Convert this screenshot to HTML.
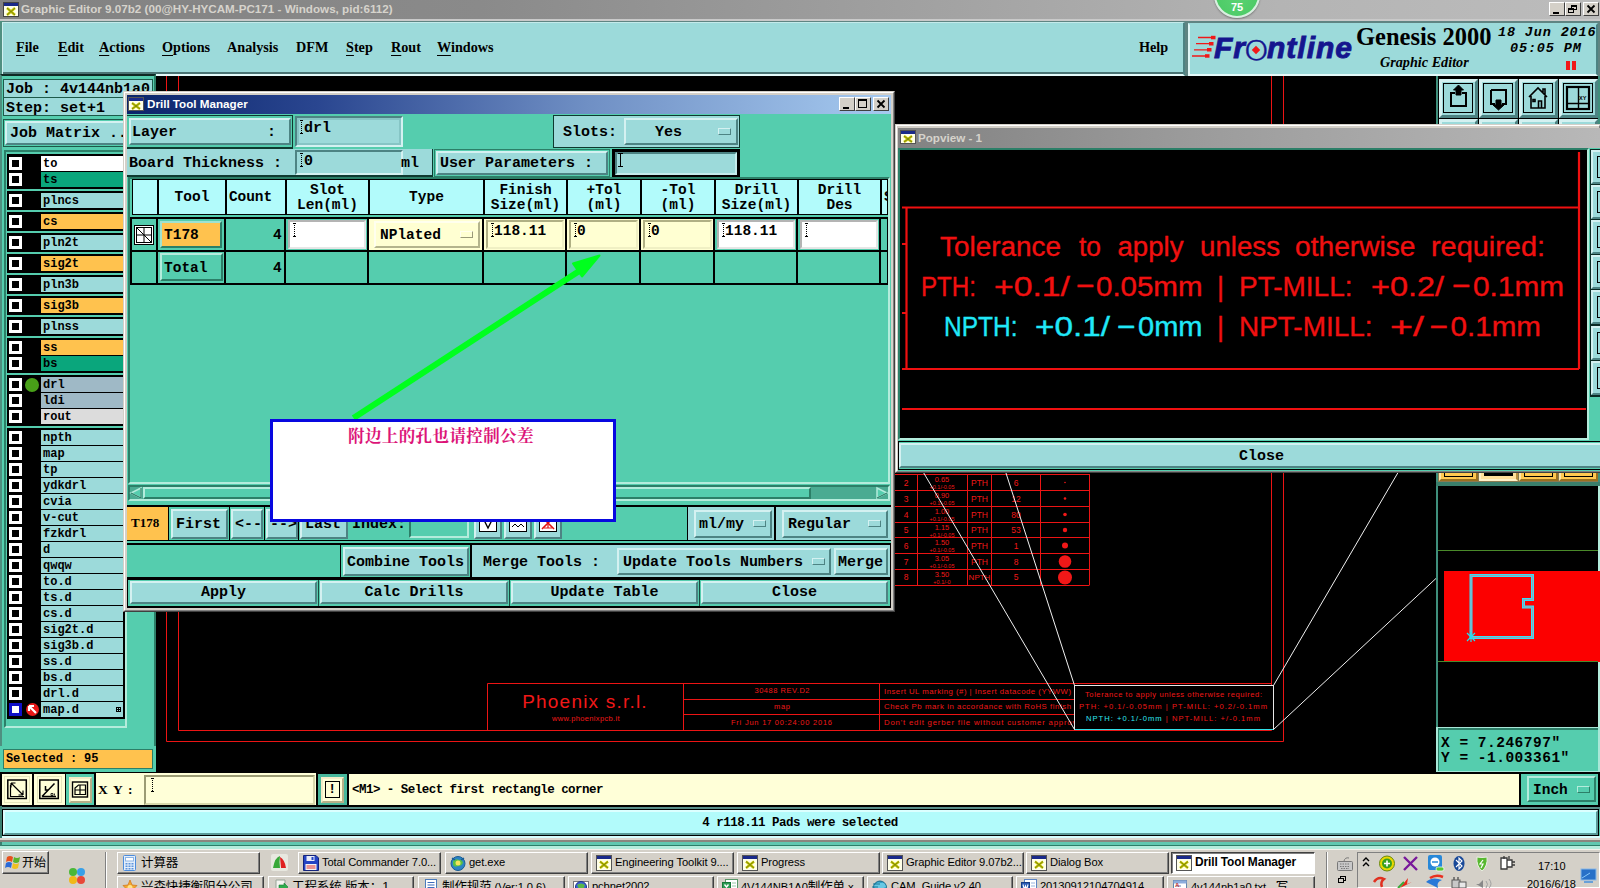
<!DOCTYPE html>
<html lang="en"><head><meta charset="utf-8"><title>Graphic Editor 9.07b2</title>
<style>
*{box-sizing:border-box;margin:0;padding:0}
html,body{width:1600px;height:888px;overflow:hidden;background:#000}
body{position:relative;font-family:"Liberation Mono","Noto Sans CJK SC",monospace;font-weight:bold;font-size:15px;color:#000;line-height:1}
.a{position:absolute;white-space:nowrap}
.teal{background:#55cdae}
.cy{background:#9cdada}
/* motif 3d: raised */
.r{border:2px solid;border-color:#d4f1f1 #4d8383 #4d8383 #d4f1f1;background:#9cdada}
.rt{border:2px solid;border-color:#b4ecdc #2c7f68 #2c7f68 #b4ecdc;background:#55cdae}
/* sunken */
.s{border:2px solid;border-color:#4d8383 #d4f1f1 #d4f1f1 #4d8383;background:#9cdada}
.st{border:2px solid;border-color:#2c7f68 #b4ecdc #b4ecdc #2c7f68;background:#55cdae}
.m{font-family:"Liberation Mono","Noto Sans CJK SC",monospace;font-weight:bold}
.c{text-align:center}
.tah{font-family:"Liberation Sans","Noto Sans CJK SC",sans-serif}
.ser{font-family:"Liberation Serif","Noto Serif CJK SC",serif}
svg{position:absolute;overflow:visible}
</style></head><body>
<!-- main app title bar -->
<div class="a" style="left:0;top:0;width:1600px;height:20px;background:linear-gradient(90deg,#828282 0%,#8a8a8a 30%,#b4b4b4 80%,#bcbcbc 100%)"></div>
<div class="a" style="left:0;top:19px;width:1600px;height:2px;background:#c9c9c9"></div>
<div class="a" style="left:0;top:21px;width:1600px;height:55px;background:#5f8482"></div>
<div class="a" style="left:0;top:21px;width:4px;height:830px;background:#4f8f80"></div>
<svg style="left:3px;top:2px" width="16" height="15" viewBox="0 0 16 15"><rect x="0" y="0" width="16" height="15" fill="#fff"/><rect x="0.5" y="0.5" width="15" height="14" fill="#ffffe8" stroke="#444"/><rect x="1" y="1" width="14" height="3" fill="#1a2a8a"/><path d="M4 6 L12 13 M12 6 L4 13" stroke="#c8c400" stroke-width="2.4"/><path d="M4 6 L12 13 M12 6 L4 13" stroke="#6a7a10" stroke-width="0.8"/></svg>
<div class="a tah" style="left:21px;top:3px;font-size:11.65px;font-weight:bold;color:#d6d3cc;letter-spacing:0px">Graphic Editor 9.07b2 (00@HY-HYCAM-PC171 - Windows, pid:6112)</div>
<!-- window controls -->
<div class="a" style="left:1549px;top:2px;width:16px;height:14px;background:#d4d0c8;border:1px solid;border-color:#fff #404040 #404040 #fff"><div class="a" style="left:3px;top:9px;width:6px;height:2px;background:#000"></div></div>
<div class="a" style="left:1565px;top:2px;width:16px;height:14px;background:#d4d0c8;border:1px solid;border-color:#fff #404040 #404040 #fff"><div class="a" style="left:5px;top:2px;width:6px;height:5px;border:1px solid #000;border-top-width:2px"></div><div class="a" style="left:2px;top:5px;width:6px;height:5px;border:1px solid #000;border-top-width:2px;background:#d4d0c8"></div></div>
<div class="a" style="left:1583px;top:2px;width:16px;height:14px;background:#d4d0c8;border:1px solid;border-color:#fff #404040 #404040 #fff"><svg style="left:3px;top:2px" width="8" height="8"><path d="M0.5 0.5 L7.5 7.5 M7.5 0.5 L0.5 7.5" stroke="#000" stroke-width="1.8"/></svg></div>
<!-- green 75 bubble -->
<div class="a" style="left:1214px;top:-28px;width:46px;height:46px;border-radius:50%;background:radial-gradient(circle at 50% 60%,#5ad272 0%,#4ccb66 65%,#38b050 100%);border:2px solid #d8efe0;box-shadow:0 1px 2px rgba(0,0,0,.35)"></div>
<div class="a tah c" style="left:1214px;top:2px;width:46px;font-size:11px;font-weight:bold;color:#fff">75</div>
<!-- menu bar -->
<div class="a" style="left:2px;top:21.5px;width:1183px;height:54.5px;background:#9cdada;border-top:1.5px solid #c4eaea;border-bottom:2px solid #e4fafa;border-right:2px solid #4d8383;border-left:1.5px solid #d0f0f0;box-shadow:inset 0 -2px 0 #4a7474"></div>
<div class="a ser" style="left:0;top:40px;font-size:14.2px;font-weight:bold;word-spacing:0;text-underline-offset:3px">
<span class="a" style="left:16px"><u>F</u>ile</span>
<span class="a" style="left:58px"><u>E</u>dit</span>
<span class="a" style="left:99px"><u>A</u>ctions</span>
<span class="a" style="left:162px"><u>O</u>ptions</span>
<span class="a" style="left:227px">Analysis</span>
<span class="a" style="left:296px">DFM</span>
<span class="a" style="left:346px"><u>S</u>tep</span>
<span class="a" style="left:391px"><u>R</u>out</span>
<span class="a" style="left:437px"><u>W</u>indows</span>
<span class="a" style="left:1139px">Help</span>
</div>
<!-- logo panel -->
<div class="a" style="left:1188px;top:23px;width:410px;height:53px;background:#9cdada;border:2px solid;border-color:#9cdada #4d8383 #e4fafa #dff6f6"></div>
<svg style="left:1190px;top:34px" width="28" height="26" viewBox="0 0 28 26"><g stroke="#f01818" stroke-width="1.3"><path d="M8 3.500H24M6 9.700H22M4 15.800H20M2 22H18"/></g><g fill="#f01818"><rect x="21" y="1.800" width="4.500" height="3.500"/><rect x="19" y="8" width="4.500" height="3.500"/><rect x="17" y="14" width="4.500" height="3.500"/><rect x="15" y="20.200" width="4.500" height="3.500"/></g></svg>
<div class="a tah" id="fl" style="left:1214px;top:32.5px;font-size:30px;font-weight:bold;font-style:italic;color:#15158e;letter-spacing:1px;-webkit-text-stroke:0.9px #15158e">Fr<span id="flo" style="display:inline-block;width:21px;height:20px;position:relative;vertical-align:baseline"><span style="position:absolute;left:-1px;top:-9px;font-family:'DejaVu Sans','Liberation Sans',sans-serif;font-weight:200;font-style:normal;font-size:37px;letter-spacing:0;-webkit-text-stroke:0.3px #15158e;transform:scale(1.2,0.95);transform-origin:50% 70%">o</span></span>ntline</div>
<div class="a" id="fld" style="left:1252.5px;top:46.5px;width:6px;height:6px;background:#f01818;transform:rotate(45deg)"></div>
<div class="a ser" style="left:1356px;top:25px;font-size:24.5px;font-weight:bold">Genesis 2000</div>
<div class="a ser" style="left:1380px;top:55px;font-size:14.2px;font-weight:bold;font-style:italic">Graphic Editor</div>
<div class="a m" style="left:1498px;top:26px;font-size:13.5px;font-style:italic;letter-spacing:0.85px">18 Jun 2016</div>
<div class="a m" style="left:1510px;top:41.500px;font-size:13.5px;font-style:italic;letter-spacing:0.85px">05:05 PM</div>
<div class="a" style="left:1566px;top:61px;width:4px;height:9px;background:#f01818"></div><div class="a" style="left:1572px;top:61px;width:4px;height:9px;background:#f01818"></div>
<!-- main canvas drawing (behind windows) -->
<svg style="left:0;top:0;z-index:0" width="1600" height="888" font-family="Liberation Sans, sans-serif" font-weight="normal">
<g stroke="#ec1414" stroke-width="1" fill="none">
<path d="M166.5 76V741.5H1283.5V76"/>
<path d="M178.5 76V730.5H1271.5V76"/>
<path d="M487.5 683.5H1271.5M487.5 683.5V730M683.5 683.5V730M879.5 683.5V730M683.5 699.5H1075M683.5 714.5H1075"/>
<!-- small drill table -->
<path d="M895 474.5H1089.5M895 490.5H1089.5M895 506.5H1089.5M895 522.5H1089.5M895 537.5H1089.5M895 553.5H1089.5M895 569.5H1089.5M895 585.5H1089.5M917.5 474V585M967.5 474V585M991.5 474V585M1040.500 474V585M1089.5 474V585"/>
</g>
<g fill="#f01818">
<circle cx="1065" cy="482.5" r="0.8"/><circle cx="1065" cy="498.500" r="1.3"/><circle cx="1065" cy="514.500" r="1.800"/><circle cx="1065" cy="530" r="2.200"/><circle cx="1065" cy="545.500" r="3"/><circle cx="1065" cy="561.5" r="6.3"/><circle cx="1065" cy="577.5" r="7"/>
</g>
<g fill="#f01818" font-size="8.5" text-anchor="middle">
<text x="906" y="485.500">2</text><text x="906" y="501.500">3</text><text x="906" y="517.500">4</text><text x="906" y="533">5</text><text x="906" y="548.500">6</text><text x="906" y="564.5">7</text><text x="906" y="580">8</text>
<text x="942" y="482" font-size="7.500">0.65</text><text x="942" y="498" font-size="7.500">0.90</text><text x="942" y="514" font-size="7.500">1.00</text><text x="942" y="529.5" font-size="7.500">1.15</text><text x="942" y="545" font-size="7.500">1.50</text><text x="942" y="561" font-size="7.500">3.05</text><text x="942" y="576.5" font-size="7.500">3.50</text>
<g font-size="5.5"><text x="942" y="489">+0.1/-0.05</text><text x="942" y="505">+0.1/-0.05</text><text x="942" y="521">+0.1/-0.05</text><text x="942" y="536.5">+0.1/-0.05</text><text x="942" y="552">+0.1/-0.05</text><text x="942" y="568">+0.1/-0.05</text><text x="942" y="583.5">+0.1/-0</text></g>
<text x="979.5" y="485.500">PTH</text><text x="979.5" y="501.500">PTH</text><text x="979.5" y="517.500">PTH</text><text x="979.5" y="533">PTH</text><text x="979.5" y="548.500">PTH</text><text x="979.5" y="564.5">PTH</text><text x="979.5" y="580" font-size="8">NPTH</text>
<text x="1016" y="485.500">6</text><text x="1016" y="501.500">12</text><text x="1016" y="517.500">80</text><text x="1016" y="533">53</text><text x="1016" y="548.500">1</text><text x="1016" y="564.5">8</text><text x="1016" y="580">5</text>
</g>
<!-- title block texts -->
<g fill="#f01818">
<text x="585" y="707.5" font-size="19" text-anchor="middle" letter-spacing="1.2">Phoenix s.r.l.</text>
<text x="552" y="721" font-size="7.500" textLength="67.5" lengthAdjust="spacing">www.phoenixpcb.it</text>
<text x="754.5" y="692.500" font-size="7.500" textLength="55" lengthAdjust="spacing">30488 REV.D2</text>
<text x="774" y="708.500" font-size="7.500" textLength="16" lengthAdjust="spacing">map</text>
<text x="731" y="724.500" font-size="7.500" textLength="101" lengthAdjust="spacing">Fri Jun 17 00:24:00 2016</text>
<text x="884" y="693.500" font-size="7.800" textLength="187" lengthAdjust="spacing">Insert UL marking (#) | Insert datacode (YYWW)</text>
<text x="884" y="709" font-size="7.800" textLength="187" lengthAdjust="spacing">Check Pb mark in accordance with RoHS finish</text>
<text x="884" y="724.500" font-size="7.800" textLength="200" lengthAdjust="spacing">Don't edit gerber file without customer approval</text>
</g>
<rect x="1074.500" y="685.5" width="199" height="44" fill="#000" stroke="#e8e8e8" stroke-width="1"/>
<path d="M1074.500 729.5H1273.5" stroke="#30e0e8" stroke-width="1.2"/>
<g font-size="7.6" fill="#f01818">
<text x="1085" y="697" textLength="177" lengthAdjust="spacing">Tolerance to apply unless otherwise required:</text>
<text x="1079" y="708.500" textLength="188" lengthAdjust="spacing">PTH: +0.1/-0.05mm | PT-MILL: +0.2/-0.1mm</text>
<text x="1086" y="720.5" textLength="174" lengthAdjust="spacing"><tspan fill="#30e8f0">NPTH: +0.1/-0mm</tspan> | NPT-MILL: +/-0.1mm</text>
</g>
<g stroke="#f0f0f0" stroke-width="1" fill="none">
<path d="M922 470L1074.500 729.500M1005 470L1074.500 685.500M1399.500 470L1273.500 685.500M1437 577.500L1273.500 729.500"/>
</g>
</svg>
<!-- left panel -->
<div class="a" style="left:0;top:74px;width:156px;height:698px;background:#55cdae;border:2px solid;border-color:#0e2a24 #2c7f68 #2c7f68 #4f8f80"></div>
<div class="a" style="left:3px;top:79px;width:150px;height:19px;border:1px solid #1d5a4a;background:#9cdada"></div>
<div class="a" style="left:3px;top:97px;width:150px;height:19px;border:1px solid #1d5a4a;background:#9cdada"></div>
<div class="a m" style="left:6px;top:82px;font-size:15px">Job : 4v144nb1a0</div>
<div class="a m" style="left:6px;top:101px;font-size:15px">Step: set+1</div>
<div class="a" style="left:3px;top:119px;width:150px;height:28px;border:1px solid #1d5a4a;background:#55cdae"></div>
<div class="a r" style="left:5px;top:121px;width:146px;height:24px"></div>
<div class="a m" style="left:10px;top:126px;font-size:15px">Job Matrix ...</div>
<div class="a" style="left:4px;top:150px;width:123px;height:578px;background:#55cdae;border:2px solid;border-color:#2c7f68 #b4ecdc #b4ecdc #2c7f68"></div>
<div class="a" style="left:7px;top:154px;width:118px;height:35px;background:#000"></div>
<div class="a" style="left:9px;top:157px;width:13px;height:13px;border:3px solid #fff;background:#000"></div>
<div class="a m" style="left:41px;top:156px;width:82px;height:15px;background:#fff;font-size:12px;line-height:16px;padding-left:2px">to</div>
<div class="a" style="left:9px;top:173px;width:13px;height:13px;border:3px solid #fff;background:#000"></div>
<div class="a m" style="left:41px;top:172px;width:82px;height:15px;background:#0aa67c;font-size:12px;line-height:16px;padding-left:2px">ts</div>
<div class="a" style="left:7px;top:191px;width:118px;height:19px;background:#000"></div>
<div class="a" style="left:9px;top:194px;width:13px;height:13px;border:3px solid #fff;background:#000"></div>
<div class="a m" style="left:41px;top:193px;width:82px;height:15px;background:#9cdada;font-size:12px;line-height:16px;padding-left:2px">plncs</div>
<div class="a" style="left:7px;top:212px;width:118px;height:19px;background:#000"></div>
<div class="a" style="left:9px;top:215px;width:13px;height:13px;border:3px solid #fff;background:#000"></div>
<div class="a m" style="left:41px;top:214px;width:82px;height:15px;background:#ffc24e;font-size:12px;line-height:16px;padding-left:2px">cs</div>
<div class="a" style="left:7px;top:233px;width:118px;height:19px;background:#000"></div>
<div class="a" style="left:9px;top:236px;width:13px;height:13px;border:3px solid #fff;background:#000"></div>
<div class="a m" style="left:41px;top:235px;width:82px;height:15px;background:#9cdada;font-size:12px;line-height:16px;padding-left:2px">pln2t</div>
<div class="a" style="left:7px;top:254px;width:118px;height:19px;background:#000"></div>
<div class="a" style="left:9px;top:257px;width:13px;height:13px;border:3px solid #fff;background:#000"></div>
<div class="a m" style="left:41px;top:256px;width:82px;height:15px;background:#ffc24e;font-size:12px;line-height:16px;padding-left:2px">sig2t</div>
<div class="a" style="left:7px;top:275px;width:118px;height:19px;background:#000"></div>
<div class="a" style="left:9px;top:278px;width:13px;height:13px;border:3px solid #fff;background:#000"></div>
<div class="a m" style="left:41px;top:277px;width:82px;height:15px;background:#9cdada;font-size:12px;line-height:16px;padding-left:2px">pln3b</div>
<div class="a" style="left:7px;top:296px;width:118px;height:19px;background:#000"></div>
<div class="a" style="left:9px;top:299px;width:13px;height:13px;border:3px solid #fff;background:#000"></div>
<div class="a m" style="left:41px;top:298px;width:82px;height:15px;background:#ffc24e;font-size:12px;line-height:16px;padding-left:2px">sig3b</div>
<div class="a" style="left:7px;top:317px;width:118px;height:19px;background:#000"></div>
<div class="a" style="left:9px;top:320px;width:13px;height:13px;border:3px solid #fff;background:#000"></div>
<div class="a m" style="left:41px;top:319px;width:82px;height:15px;background:#9cdada;font-size:12px;line-height:16px;padding-left:2px">plnss</div>
<div class="a" style="left:7px;top:338px;width:118px;height:35px;background:#000"></div>
<div class="a" style="left:9px;top:341px;width:13px;height:13px;border:3px solid #fff;background:#000"></div>
<div class="a m" style="left:41px;top:340px;width:82px;height:15px;background:#ffc24e;font-size:12px;line-height:16px;padding-left:2px">ss</div>
<div class="a" style="left:9px;top:357px;width:13px;height:13px;border:3px solid #fff;background:#000"></div>
<div class="a m" style="left:41px;top:356px;width:82px;height:15px;background:#0aa67c;font-size:12px;line-height:16px;padding-left:2px">bs</div>
<div class="a" style="left:7px;top:375px;width:118px;height:51px;background:#000"></div>
<div class="a" style="left:9px;top:378px;width:13px;height:13px;border:3px solid #fff;background:#000"></div>
<div class="a" style="left:25px;top:378px;width:14px;height:14px;border-radius:50%;background:#48a018"></div>
<div class="a m" style="left:41px;top:377px;width:82px;height:15px;background:#9fb9c6;font-size:12px;line-height:16px;padding-left:2px">drl</div>
<div class="a" style="left:9px;top:394px;width:13px;height:13px;border:3px solid #fff;background:#000"></div>
<div class="a m" style="left:41px;top:393px;width:82px;height:15px;background:#9fb9c6;font-size:12px;line-height:16px;padding-left:2px">ldi</div>
<div class="a" style="left:9px;top:410px;width:13px;height:13px;border:3px solid #fff;background:#000"></div>
<div class="a m" style="left:41px;top:409px;width:82px;height:15px;background:#dcdcdc;font-size:12px;line-height:16px;padding-left:2px">rout</div>
<div class="a" style="left:7px;top:428px;width:118px;height:291px;background:#000"></div>
<div class="a" style="left:9px;top:431px;width:13px;height:13px;border:3px solid #fff;background:#000"></div>
<div class="a m" style="left:41px;top:430px;width:82px;height:15px;background:#9cdada;font-size:12px;line-height:16px;padding-left:2px">npth</div>
<div class="a" style="left:9px;top:447px;width:13px;height:13px;border:3px solid #fff;background:#000"></div>
<div class="a m" style="left:41px;top:446px;width:82px;height:15px;background:#9cdada;font-size:12px;line-height:16px;padding-left:2px">map</div>
<div class="a" style="left:9px;top:463px;width:13px;height:13px;border:3px solid #fff;background:#000"></div>
<div class="a m" style="left:41px;top:462px;width:82px;height:15px;background:#9cdada;font-size:12px;line-height:16px;padding-left:2px">tp</div>
<div class="a" style="left:9px;top:479px;width:13px;height:13px;border:3px solid #fff;background:#000"></div>
<div class="a m" style="left:41px;top:478px;width:82px;height:15px;background:#9cdada;font-size:12px;line-height:16px;padding-left:2px">ydkdrl</div>
<div class="a" style="left:9px;top:495px;width:13px;height:13px;border:3px solid #fff;background:#000"></div>
<div class="a m" style="left:41px;top:494px;width:82px;height:15px;background:#9cdada;font-size:12px;line-height:16px;padding-left:2px">cvia</div>
<div class="a" style="left:9px;top:511px;width:13px;height:13px;border:3px solid #fff;background:#000"></div>
<div class="a m" style="left:41px;top:510px;width:82px;height:15px;background:#9cdada;font-size:12px;line-height:16px;padding-left:2px">v-cut</div>
<div class="a" style="left:9px;top:527px;width:13px;height:13px;border:3px solid #fff;background:#000"></div>
<div class="a m" style="left:41px;top:526px;width:82px;height:15px;background:#9cdada;font-size:12px;line-height:16px;padding-left:2px">fzkdrl</div>
<div class="a" style="left:9px;top:543px;width:13px;height:13px;border:3px solid #fff;background:#000"></div>
<div class="a m" style="left:41px;top:542px;width:82px;height:15px;background:#9cdada;font-size:12px;line-height:16px;padding-left:2px">d</div>
<div class="a" style="left:9px;top:559px;width:13px;height:13px;border:3px solid #fff;background:#000"></div>
<div class="a m" style="left:41px;top:558px;width:82px;height:15px;background:#9cdada;font-size:12px;line-height:16px;padding-left:2px">qwqw</div>
<div class="a" style="left:9px;top:575px;width:13px;height:13px;border:3px solid #fff;background:#000"></div>
<div class="a m" style="left:41px;top:574px;width:82px;height:15px;background:#9cdada;font-size:12px;line-height:16px;padding-left:2px">to.d</div>
<div class="a" style="left:9px;top:591px;width:13px;height:13px;border:3px solid #fff;background:#000"></div>
<div class="a m" style="left:41px;top:590px;width:82px;height:15px;background:#9cdada;font-size:12px;line-height:16px;padding-left:2px">ts.d</div>
<div class="a" style="left:9px;top:607px;width:13px;height:13px;border:3px solid #fff;background:#000"></div>
<div class="a m" style="left:41px;top:606px;width:82px;height:15px;background:#9cdada;font-size:12px;line-height:16px;padding-left:2px">cs.d</div>
<div class="a" style="left:9px;top:623px;width:13px;height:13px;border:3px solid #fff;background:#000"></div>
<div class="a m" style="left:41px;top:622px;width:82px;height:15px;background:#9cdada;font-size:12px;line-height:16px;padding-left:2px">sig2t.d</div>
<div class="a" style="left:9px;top:639px;width:13px;height:13px;border:3px solid #fff;background:#000"></div>
<div class="a m" style="left:41px;top:638px;width:82px;height:15px;background:#9cdada;font-size:12px;line-height:16px;padding-left:2px">sig3b.d</div>
<div class="a" style="left:9px;top:655px;width:13px;height:13px;border:3px solid #fff;background:#000"></div>
<div class="a m" style="left:41px;top:654px;width:82px;height:15px;background:#9cdada;font-size:12px;line-height:16px;padding-left:2px">ss.d</div>
<div class="a" style="left:9px;top:671px;width:13px;height:13px;border:3px solid #fff;background:#000"></div>
<div class="a m" style="left:41px;top:670px;width:82px;height:15px;background:#9cdada;font-size:12px;line-height:16px;padding-left:2px">bs.d</div>
<div class="a" style="left:9px;top:687px;width:13px;height:13px;border:3px solid #fff;background:#000"></div>
<div class="a m" style="left:41px;top:686px;width:82px;height:15px;background:#9cdada;font-size:12px;line-height:16px;padding-left:2px">drl.d</div>
<div class="a" style="left:9px;top:703px;width:13px;height:13px;border:3px solid #1010c8;background:#fff"></div>
<div class="a" style="left:26px;top:703px;width:13px;height:13px;border-radius:50%;background:#e81818"></div>
<svg style="left:26px;top:703px" width="13" height="13"><path d="M3 3H8M3 3V8M3.500 3.500L10 10" stroke="#fff" stroke-width="2.200" fill="none"/></svg>
<div class="a m" style="left:41px;top:702px;width:82px;height:15px;background:#9cdada;font-size:12px;line-height:16px;padding-left:2px">map.d</div>
<div class="a" style="left:116px;top:707px;width:5px;height:5px;border:1px solid #000"></div><div class="a" style="left:118px;top:707px;width:1px;height:5px;background:#000"></div><div class="a" style="left:116px;top:709px;width:5px;height:1px;background:#000"></div>
<!-- right toolbar -->
<div class="a" style="left:1436px;top:76px;width:164px;height:696px;background:#3f8f7c"></div>
<div class="a" style="left:1438px;top:76px;width:160px;height:410px;background:#000"></div>
<div class="a r" style="left:1439px;top:79px;width:39px;height:39px;border-width:3px"></div>
<div class="a r" style="left:1479px;top:79px;width:39px;height:39px;border-width:3px"></div>
<div class="a r" style="left:1519px;top:79px;width:39px;height:39px;border-width:3px"></div>
<div class="a r" style="left:1559px;top:79px;width:39px;height:39px;border-width:3px"></div>
<div class="a r" style="left:1439px;top:119px;width:39px;height:39px;border-width:3px"></div>
<div class="a r" style="left:1479px;top:119px;width:39px;height:39px;border-width:3px"></div>
<div class="a r" style="left:1519px;top:119px;width:39px;height:39px;border-width:3px"></div>
<div class="a r" style="left:1559px;top:119px;width:39px;height:39px;border-width:3px"></div>
<svg style="left:1439px;top:79px" width="160" height="40" viewBox="0 0 160 40" fill="none" stroke="#000">
<g stroke-width="1"><rect x="4.500" y="4.500" width="29" height="29"/><rect x="44.500" y="4.500" width="29" height="29"/><rect x="84.500" y="4.500" width="29" height="29"/><rect x="124.500" y="4.500" width="29" height="29"/></g>
<path d="M16 14H12V27H27V14H23" stroke-width="2"/><path d="M19.500 6L14.500 11H17V16H22V11H24.500Z" fill="#000" stroke-width="1"/>
<path d="M52 11H67V25H63M56 25H52V11" stroke-width="2"/><path d="M57 21H62V26H65L59.500 31L54 26H57Z" fill="#000" stroke-width="1"/>
<path d="M90 18L99 9L108 18M92 17V29H106V17M99.500 29V22H102.500V29M94 20.500H96V22.500H94Z M104 14V10H106V16" stroke-width="1.6"/>
<rect x="128" y="8" width="22" height="22" stroke-width="2.200"/><path d="M139.500 8V30M128 24.500H150" stroke-width="1.4"/>
</svg>
<div class="a tah" style="left:1579px;top:96px;font-size:5.5px;font-weight:bold">XY</div>
<!-- orange row -->
<div class="a" style="left:1438px;top:470px;width:160px;height:14px;background:#8a7a50"></div>
<div class="a" style="left:1439px;top:462px;width:39px;height:19px;background:#ffc850;border:2px solid;border-color:#ffe6a8 #9a7020 #9a7020 #ffe6a8"></div>
<div class="a" style="left:1479px;top:462px;width:39px;height:19px;background:#ffe09a;border:2px solid;border-color:#fff0c8 #b89040 #fff0c8 #fff0c8"></div>
<div class="a" style="left:1519px;top:462px;width:39px;height:19px;background:#ffc850;border:2px solid;border-color:#ffe6a8 #9a7020 #9a7020 #ffe6a8"></div>
<div class="a" style="left:1559px;top:462px;width:39px;height:19px;background:#ffc850;border:2px solid;border-color:#ffe6a8 #9a7020 #9a7020 #ffe6a8"></div>
<div class="a" style="left:1444px;top:470px;width:29px;height:7px;border:1px solid #000;border-top:0"></div>
<div class="a" style="left:1484px;top:470px;width:29px;height:6px;background:#000"></div>
<div class="a" style="left:1524px;top:470px;width:29px;height:7px;border:1px solid #000;border-top:0"></div>
<div class="a" style="left:1564px;top:470px;width:29px;height:7px;border:1px solid #000;border-top:0"></div>
<div class="a" style="left:1436px;top:482px;width:164px;height:4px;background:#3a7f6c"></div>
<!-- minimap -->
<div class="a" style="left:1438px;top:486px;width:160px;height:241px;background:#000"></div>
<div class="a" style="left:1598px;top:486px;width:2px;height:241px;background:#b4ecdc"></div>
<div class="a" style="left:1444px;top:571px;width:156px;height:91px;background:#fc0000"></div>
<div class="a" style="left:1438px;top:550px;width:160px;height:1px;background:#4a8a2a"></div>
<div class="a" style="left:1438px;top:661px;width:160px;height:1px;background:#4a8a2a"></div>
<svg style="left:1438px;top:486px" width="160" height="241"><path d="M33 151.500V89.500H94.500V113.500H85.500V121H94.500V151.500Z" fill="none" stroke="#38e0f8" stroke-width="3"/><path d="M33 151.500V89.500H94.500V113.500H85.500V121H94.500V151.500Z" fill="none" stroke="#c08898" stroke-width="0.7"/><path d="M29 147L37 155M37 147L29 155M33 146V156" stroke="#20e0f0" stroke-width="1.200"/></svg>
<!-- coords -->
<div class="a" style="left:1436px;top:726.5px;width:164px;height:46px;background:#a8e8d8"></div><div class="a" style="left:1438px;top:728px;width:160px;height:43px;background:#55cdae;border-top:2px solid #2c7f68;border-left:1px solid #2c7f68"></div>
<div class="a" style="left:1441px;top:736px;font-size:14.5px;letter-spacing:0.5px">X = 7.246797"</div>
<div class="a" style="left:1441px;top:751px;font-size:14.5px;letter-spacing:0.5px">Y = -1.003361"</div>
<!-- Drill Tool Manager window -->
<div class="a" style="left:123px;top:91px;width:772px;height:521px;background:#d4d0c8;border:1px solid;border-color:#d4d0c8 #404040 #404040 #d4d0c8"></div>
<div class="a" style="left:124px;top:92px;width:770px;height:519px;border:1px solid;border-color:#fff #808080 #808080 #fff"></div>
<div class="a" style="left:127px;top:95px;width:764px;height:19px;background:linear-gradient(90deg,#0a246a 0%,#2a4690 25%,#6f8fc4 60%,#a6caf0 100%)"></div>
<svg style="left:128px;top:97px" width="16" height="14" viewBox="0 0 16 14"><rect x="0.5" y="0.5" width="15" height="13" fill="#ffffe8" stroke="#555"/><rect x="1" y="1" width="14" height="3" fill="#1a2a8a"/><path d="M4 6 L12 12 M12 6 L4 12" stroke="#c8c400" stroke-width="2.4"/><path d="M4 6 L12 12 M12 6 L4 12" stroke="#6a7a10" stroke-width="0.8"/></svg>
<div class="a tah" style="left:147px;top:98px;font-size:11.65px;font-weight:bold;color:#fff">Drill Tool Manager</div>
<div class="a" style="left:839px;top:97px;width:16px;height:14px;background:#d4d0c8;border:1px solid;border-color:#fff #404040 #404040 #fff"><div class="a" style="left:3px;top:9px;width:6px;height:2px;background:#000"></div></div>
<div class="a" style="left:855px;top:97px;width:16px;height:14px;background:#d4d0c8;border:1px solid;border-color:#fff #404040 #404040 #fff"><div class="a" style="left:2px;top:1px;width:9px;height:9px;border:1px solid #000;border-top-width:2px"></div></div>
<div class="a" style="left:873px;top:97px;width:16px;height:14px;background:#d4d0c8;border:1px solid;border-color:#fff #404040 #404040 #fff"><svg style="left:3px;top:2px" width="8" height="8"><path d="M0.5 0.5 L7.5 7.5 M7.5 0.5 L0.5 7.5" stroke="#000" stroke-width="1.8"/></svg></div>
<!-- client -->
<div class="a teal" style="left:127px;top:114px;width:764px;height:494px"></div>
<!-- row1 -->
<div class="a" style="left:127px;top:115px;width:166px;height:34px;background:#55cdae;border:1px solid #0e3a30;border-width:1px 1px 2px 0"></div>
<div class="a r" style="left:129px;top:118px;width:162px;height:27px"></div>
<div class="a" style="left:132px;top:125px">Layer</div><div class="a" style="left:267px;top:125px">:</div>
<div class="a s" style="left:295px;top:116px;width:108px;height:31px"></div>
<div class="a" style="left:297px;top:118px;width:104px;height:27px;border:2px solid #86c5c5"></div>
<div class="a" style="left:301px;top:120px;width:1px;height:13px;background:repeating-linear-gradient(#000 0 1px,transparent 1px 2px)"></div><div class="a" style="left:300px;top:120px;width:3px;height:1px;background:#000"></div><div class="a" style="left:300px;top:133px;width:3px;height:1px;background:#000"></div><div class="a" style="left:304px;top:121px">drl</div>
<div class="a" style="left:553px;top:115px;width:187px;height:33px;background:#9cdada;border:1px solid;border-color:#0e3a30"></div>
<div class="a" style="left:563px;top:125px">Slots:</div>
<div class="a r" style="left:624px;top:118px;width:114px;height:27px"></div>
<div class="a" style="left:655px;top:125px">Yes</div>
<div class="a r" style="left:718px;top:128px;width:13px;height:7px;border-width:1px"></div>
<!-- row2 -->
<div class="a" style="left:127px;top:149px;width:306px;height:28px;background:#9cdada;border:1px solid #0e3a30;border-width:0 1px 2px 0"></div>
<div class="a" style="left:129px;top:156px">Board Thickness :</div>
<div class="a s" style="left:295px;top:150px;width:108px;height:25px"></div>
<div class="a" style="left:301px;top:153px;width:1px;height:13px;background:repeating-linear-gradient(#000 0 1px,transparent 1px 2px)"></div><div class="a" style="left:300px;top:153px;width:3px;height:1px;background:#000"></div><div class="a" style="left:300px;top:166px;width:3px;height:1px;background:#000"></div><div class="a" style="left:304px;top:154px">0</div>
<div class="a" style="left:401px;top:156px">ml</div>
<div class="a" style="left:434px;top:149px;width:176px;height:28px;background:#55cdae;border:1px solid #2c7f68"></div>
<div class="a r" style="left:436px;top:151px;width:172px;height:24px"></div>
<div class="a" style="left:440px;top:156px">User Parameters :</div>
<div class="a" style="left:612px;top:149px;width:128px;height:29px;background:#9cdada;border:3px solid #000"></div>
<div class="a s" style="left:615px;top:152px;width:122px;height:23px;border-color:#4d8383 #c4ecec #c4ecec #4d8383"></div>
<div class="a" style="left:620px;top:153px;width:1px;height:14px;background:#000"></div><div class="a" style="left:618px;top:153px;width:5px;height:1px;background:#000"></div><div class="a" style="left:618px;top:166px;width:5px;height:1px;background:#000"></div>
<!-- table frame -->
<div class="a st" style="left:128px;top:177px;width:762px;height:307px"></div>


<div class="a" style="left:132px;top:179px;width:756px;height:36px;background:#000"></div>
<div class="a" style="left:130px;top:217px;width:758px;height:68px;background:#000"></div>
<div class="a c" style="left:133px;top:180px;width:24px;height:34px;background:#b2fbfb;font-size:14.5px;line-height:15px;padding-top:10px;overflow:hidden"></div>
<div class="a" style="left:132px;top:219px;width:24px;height:31px;background:#55cdae"></div>
<div class="a" style="left:132px;top:252px;width:24px;height:31px;background:#55cdae"></div>
<div class="a c" style="left:159px;top:180px;width:66px;height:34px;background:#b2fbfb;font-size:14.5px;line-height:15px;padding-top:10px;overflow:hidden">Tool</div>
<div class="a" style="left:158px;top:219px;width:66px;height:31px;background:#55cdae"></div>
<div class="a" style="left:158px;top:252px;width:66px;height:31px;background:#55cdae"></div>
<div class="a c" style="left:227px;top:180px;width:58px;height:34px;background:#b2fbfb;font-size:14.5px;line-height:15px;padding-top:10px;overflow:hidden;text-align:left;padding-left:2px;letter-spacing:-0.1px">Count</div>
<div class="a" style="left:226px;top:219px;width:58px;height:31px;background:#55cdae"></div>
<div class="a" style="left:226px;top:252px;width:58px;height:31px;background:#55cdae"></div>
<div class="a c" style="left:287px;top:180px;width:81px;height:34px;background:#b2fbfb;font-size:14.5px;line-height:15px;padding-top:3px;overflow:hidden">Slot<br>Len(ml)</div>
<div class="a" style="left:286px;top:219px;width:81px;height:31px;background:#55cdae"></div>
<div class="a" style="left:286px;top:252px;width:81px;height:31px;background:#55cdae"></div>
<div class="a c" style="left:370px;top:180px;width:113px;height:34px;background:#b2fbfb;font-size:14.5px;line-height:15px;padding-top:10px;overflow:hidden">Type</div>
<div class="a" style="left:369px;top:219px;width:113px;height:31px;background:#ffffd2"></div>
<div class="a" style="left:369px;top:252px;width:113px;height:31px;background:#55cdae"></div>
<div class="a c" style="left:485px;top:180px;width:81px;height:34px;background:#b2fbfb;font-size:14.5px;line-height:15px;padding-top:3px;overflow:hidden">Finish<br>Size(ml)</div>
<div class="a" style="left:484px;top:219px;width:81px;height:31px;background:#ffffd2"></div>
<div class="a" style="left:484px;top:252px;width:81px;height:31px;background:#55cdae"></div>
<div class="a c" style="left:568px;top:180px;width:72px;height:34px;background:#b2fbfb;font-size:14.5px;line-height:15px;padding-top:3px;overflow:hidden">+Tol<br>(ml)</div>
<div class="a" style="left:567px;top:219px;width:72px;height:31px;background:#ffffd2"></div>
<div class="a" style="left:567px;top:252px;width:72px;height:31px;background:#55cdae"></div>
<div class="a c" style="left:642px;top:180px;width:72px;height:34px;background:#b2fbfb;font-size:14.5px;line-height:15px;padding-top:3px;overflow:hidden">-Tol<br>(ml)</div>
<div class="a" style="left:641px;top:219px;width:72px;height:31px;background:#ffffd2"></div>
<div class="a" style="left:641px;top:252px;width:72px;height:31px;background:#55cdae"></div>
<div class="a c" style="left:716px;top:180px;width:81px;height:34px;background:#b2fbfb;font-size:14.5px;line-height:15px;padding-top:3px;overflow:hidden">Drill<br>Size(ml)</div>
<div class="a" style="left:715px;top:219px;width:81px;height:31px;background:#55cdae"></div>
<div class="a" style="left:715px;top:252px;width:81px;height:31px;background:#55cdae"></div>
<div class="a c" style="left:799px;top:180px;width:81px;height:34px;background:#b2fbfb;font-size:14.5px;line-height:15px;padding-top:3px;overflow:hidden">Drill<br>Des</div>
<div class="a" style="left:798px;top:219px;width:81px;height:31px;background:#55cdae"></div>
<div class="a" style="left:798px;top:252px;width:81px;height:31px;background:#55cdae"></div>
<div class="a c" style="left:882px;top:180px;width:5px;height:34px;background:#b2fbfb;font-size:14.5px;line-height:15px;padding-top:10px;overflow:hidden;text-align:left;padding-left:2px">S</div>
<div class="a" style="left:881px;top:219px;width:6px;height:31px;background:#55cdae"></div>
<div class="a" style="left:881px;top:252px;width:6px;height:31px;background:#55cdae"></div>
<svg style="left:134px;top:225px" width="20" height="20" viewBox="0 0 20 20"><rect x="0.5" y="0.5" width="19" height="19" fill="#fff" stroke="#000"/><rect x="2.5" y="2.5" width="15" height="15" fill="none" stroke="#000"/><path d="M10 2V18M2 10H18M3 3L17 17" stroke="#000" stroke-width="1"/></svg>
<div class="a" style="left:160px;top:221px;width:62px;height:27px;background:#ffc24e;border:2px solid;border-color:#9fe2d0 #2c7f68 #2c7f68 #9fe2d0"></div>
<div class="a" style="left:164px;top:228px;font-size:14.5px">T178</div>
<div class="a" style="left:273px;top:228px;font-size:14.5px">4</div>
<div class="a" style="left:273px;top:261px;font-size:14.5px">4</div>
<div class="a rt" style="left:160px;top:253px;width:63px;height:28px"></div>
<div class="a" style="left:164px;top:261px;font-size:14.5px">Total</div>
<div class="a" style="left:288px;top:220px;width:78px;height:29px;background:#fff;border:2px solid;border-color:#b4b4b4 #e6e6e6 #e6e6e6 #b4b4b4"></div><div class="a" style="left:294px;top:223px;width:1px;height:13px;background:repeating-linear-gradient(#000 0 1px,transparent 1px 2px)"></div><div class="a" style="left:293px;top:223px;width:3px;height:1px;background:#000"></div><div class="a" style="left:293px;top:236px;width:3px;height:1px;background:#000"></div>
<div class="a" style="left:374px;top:221px;width:106px;height:27px;background:#ffffd2;border:2px solid;border-color:#ffffee #b4b48c #b4b48c #ffffee"></div>
<div class="a" style="left:380px;top:228px;font-size:14.5px">NPlated</div>
<div class="a" style="left:460px;top:231px;width:13px;height:7px;background:#ffffd2;border:1px solid;border-color:#ffffee #9a9a78 #9a9a78 #ffffee"></div>
<div class="a" style="left:486px;top:220px;width:78px;height:29px;background:#ffffd2;border:2px solid;border-color:#b0b084 #f0f0c4 #f0f0c4 #b0b084"></div><div class="a" style="left:492px;top:223px;width:1px;height:13px;background:repeating-linear-gradient(#000 0 1px,transparent 1px 2px)"></div><div class="a" style="left:491px;top:223px;width:3px;height:1px;background:#000"></div><div class="a" style="left:491px;top:236px;width:3px;height:1px;background:#000"></div><div class="a" style="left:494px;top:224px;font-size:14.5px">118.11</div>
<div class="a" style="left:569px;top:220px;width:69px;height:29px;background:#ffffd2;border:2px solid;border-color:#b0b084 #f0f0c4 #f0f0c4 #b0b084"></div><div class="a" style="left:575px;top:223px;width:1px;height:13px;background:repeating-linear-gradient(#000 0 1px,transparent 1px 2px)"></div><div class="a" style="left:574px;top:223px;width:3px;height:1px;background:#000"></div><div class="a" style="left:574px;top:236px;width:3px;height:1px;background:#000"></div><div class="a" style="left:577px;top:224px;font-size:14.5px">0</div>
<div class="a" style="left:643px;top:220px;width:69px;height:29px;background:#ffffd2;border:2px solid;border-color:#b0b084 #f0f0c4 #f0f0c4 #b0b084"></div><div class="a" style="left:649px;top:223px;width:1px;height:13px;background:repeating-linear-gradient(#000 0 1px,transparent 1px 2px)"></div><div class="a" style="left:648px;top:223px;width:3px;height:1px;background:#000"></div><div class="a" style="left:648px;top:236px;width:3px;height:1px;background:#000"></div><div class="a" style="left:651px;top:224px;font-size:14.5px">0</div>
<div class="a" style="left:717px;top:220px;width:78px;height:29px;background:#fff;border:2px solid;border-color:#b4b4b4 #e6e6e6 #e6e6e6 #b4b4b4"></div><div class="a" style="left:723px;top:223px;width:1px;height:13px;background:repeating-linear-gradient(#000 0 1px,transparent 1px 2px)"></div><div class="a" style="left:722px;top:223px;width:3px;height:1px;background:#000"></div><div class="a" style="left:722px;top:236px;width:3px;height:1px;background:#000"></div><div class="a" style="left:725px;top:224px;font-size:14.5px">118.11</div>
<div class="a" style="left:800px;top:220px;width:78px;height:29px;background:#fff;border:2px solid;border-color:#b4b4b4 #e6e6e6 #e6e6e6 #b4b4b4"></div><div class="a" style="left:806px;top:223px;width:1px;height:13px;background:repeating-linear-gradient(#000 0 1px,transparent 1px 2px)"></div><div class="a" style="left:805px;top:223px;width:3px;height:1px;background:#000"></div><div class="a" style="left:805px;top:236px;width:3px;height:1px;background:#000"></div>
<!-- scrollbar -->
<div class="a" style="left:128px;top:485px;width:762px;height:16px;background:#4aab92;border:2px solid;border-color:#2c7f68 #b4ecdc #b4ecdc #2c7f68"></div>
<div class="a" style="left:143px;top:487px;width:668px;height:12px;background:#55cdae;border:2px solid;border-color:#b4ecdc #2c7f68 #2c7f68 #b4ecdc"></div>
<svg style="left:130px;top:487px" width="12" height="12"><path d="M11 1 L1 6 L11 11 Z" fill="#55cdae" stroke="#b4ecdc" stroke-width="1.5"/><path d="M11 1 V11 L1 6" fill="none" stroke="#2c7f68" stroke-width="1.2"/></svg>
<svg style="left:876px;top:487px" width="12" height="12"><path d="M1 1 L11 6 L1 11 Z" fill="#55cdae" stroke="#b4ecdc" stroke-width="1.5"/><path d="M1 11 L11 6" fill="none" stroke="#2c7f68" stroke-width="1.2"/></svg>
<!-- nav row -->
<div class="a" style="left:127px;top:505px;width:764px;height:36px;background:#000"></div>
<div class="a" style="left:127px;top:507px;width:41px;height:33px;background:#ffc24e"></div>
<div class="a ser" style="left:131px;top:516px;font-size:13px;font-weight:bold">T178</div>
<div class="a teal" style="left:169px;top:507px;width:305px;height:33px"></div>
<div class="a r" style="left:171px;top:509px;width:57px;height:30px"></div><div class="a" style="left:176px;top:517px">First</div>
<div class="a" style="left:229px;top:507px;width:1px;height:33px;background:#000"></div>
<div class="a r" style="left:231px;top:509px;width:32px;height:30px"></div><div class="a" style="left:235px;top:517px">&lt;--</div>
<div class="a" style="left:264px;top:507px;width:1px;height:33px;background:#000"></div>
<div class="a r" style="left:266px;top:509px;width:32px;height:30px"></div><div class="a" style="left:270px;top:517px">--&gt;</div>
<div class="a" style="left:298px;top:507px;width:1px;height:33px;background:#000"></div>
<div class="a r" style="left:300px;top:509px;width:48px;height:30px"></div><div class="a" style="left:305px;top:517px">Last</div>
<div class="a" style="left:349px;top:507px;width:124px;height:33px;background:#55cdae"></div>
<div class="a" style="left:352px;top:517px">Index:</div>
<div class="a st" style="left:409px;top:509px;width:60px;height:29px"></div>
<div class="a teal" style="left:473px;top:507px;width:214px;height:33px"></div>
<div class="a r" style="left:474px;top:509px;width:28px;height:30px"></div>
<div class="a r" style="left:504px;top:509px;width:28px;height:30px"></div>
<div class="a r" style="left:534px;top:509px;width:28px;height:30px"></div>
<svg style="left:478px;top:513px" width="80" height="22" viewBox="0 0 80 22"><g fill="#fff" stroke="#000" stroke-width="1"><rect x="1.5" y="1.5" width="17" height="17"/><rect x="31.5" y="1.5" width="17" height="17"/><rect x="61.5" y="1.5" width="17" height="17"/></g><path d="M5 5 L10 15 L15 5" fill="none" stroke="#000" stroke-width="1.4"/><path d="M34 14 l3 -3 l3 3 l3 -3 l3 3" fill="none" stroke="#000"/><path d="M64 4 L76 16 M76 4 L64 16" stroke="#e01010" stroke-width="1.6"/><path d="M70 6 v9 M66 15 h8" stroke="#e01010" stroke-width="1.2"/></svg>
<!-- units -->
<div class="a" style="left:688px;top:507px;width:86px;height:33px;background:#9cdada"></div>
<div class="a r" style="left:694px;top:510px;width:78px;height:28px"></div><div class="a" style="left:699px;top:517px">ml/my</div>
<div class="a r" style="left:753px;top:520px;width:13px;height:7px;border-width:1px"></div>
<div class="a" style="left:776px;top:507px;width:115px;height:33px;background:#9cdada"></div>
<div class="a r" style="left:782px;top:510px;width:106px;height:28px"></div><div class="a" style="left:788px;top:517px">Regular</div>
<div class="a r" style="left:868px;top:520px;width:13px;height:7px;border-width:1px"></div>
<!-- merge row -->
<div class="a" style="left:127px;top:543px;width:764px;height:36px;background:#000"></div>
<div class="a teal" style="left:127px;top:545px;width:213px;height:32px"></div>
<div class="a teal" style="left:341px;top:545px;width:129px;height:32px"></div>
<div class="a r" style="left:343px;top:547px;width:126px;height:29px"></div><div class="a" style="left:347px;top:555px">Combine Tools</div>
<div class="a cy" style="left:472px;top:545px;width:418px;height:32px"></div>
<div class="a" style="left:483px;top:555px">Merge Tools :</div>
<div class="a r" style="left:617px;top:548px;width:214px;height:27px"></div><div class="a" style="left:623px;top:555px">Update Tools Numbers</div>
<div class="a r" style="left:812px;top:558px;width:13px;height:7px;border-width:1px"></div>
<div class="a r" style="left:834px;top:548px;width:54px;height:27px"></div><div class="a" style="left:838px;top:555px">Merge</div>
<!-- apply row -->
<div class="a" style="left:127px;top:578px;width:764px;height:30px;background:#000"></div>
<div class="a" style="left:128px;top:579.5px;width:761.5px;height:26.5px;background:#55cdae"></div>
<div class="a r c" style="left:130px;top:581px;width:187px;height:23px;line-height:20px">Apply</div>
<div class="a r c" style="left:320px;top:581px;width:188px;height:23px;line-height:20px">Calc Drills</div>
<div class="a r c" style="left:511px;top:581px;width:187px;height:23px;line-height:20px">Update Table</div>
<div class="a r c" style="left:701px;top:581px;width:187px;height:23px;line-height:20px">Close</div>
<div class="a" style="left:318px;top:579.5px;width:1px;height:26.5px;background:#1a4a40"></div><div class="a" style="left:509px;top:579.5px;width:1px;height:26.5px;background:#1a4a40"></div><div class="a" style="left:699px;top:579.5px;width:1px;height:26.5px;background:#1a4a40"></div>
<!-- annotation: arrow + box -->
<svg style="left:0;top:0" width="1600" height="888"><line x1="353.500" y1="418" x2="580" y2="270.500" stroke="#00ff1e" stroke-width="6.2"/><polygon points="599.5,255.5 573,263.5 582,276.5" fill="#00ff1e" stroke="#00ff1e" stroke-width="2" stroke-linejoin="round"/></svg>
<div class="a" style="left:270px;top:419px;width:346px;height:103px;background:#fff;border:3px solid #0808e0"></div>
<div class="a" style="left:348px;top:428.5px;font-family:'Liberation Serif','Noto Serif CJK SC','Noto Sans CJK SC',serif;font-weight:700;font-size:16.5px;color:#dc1478;letter-spacing:0.4px">附边上的孔也请控制公差</div>
<!-- Popview window -->
<div class="a" style="left:895px;top:124px;width:706px;height:349px;background:#d4d0c8;border:1px solid;border-color:#d4d0c8 #404040 #404040 #d4d0c8"></div>
<div class="a" style="left:896px;top:125px;width:704px;height:347px;border:1px solid;border-color:#fff #808080 #808080 #fff"></div>
<div class="a" style="left:898px;top:128px;width:702px;height:20px;background:linear-gradient(90deg,#828282 0%,#9a9a9a 40%,#b8b8b8 100%)"></div>
<svg style="left:900px;top:130px" width="16" height="14" viewBox="0 0 16 14"><rect x="0.5" y="0.5" width="15" height="13" fill="#ffffe8" stroke="#555"/><rect x="1" y="1" width="14" height="3" fill="#1a2a8a"/><path d="M4 6 L12 12 M12 6 L4 12" stroke="#c8c400" stroke-width="2.4"/><path d="M4 6 L12 12 M12 6 L4 12" stroke="#6a7a10" stroke-width="0.8"/></svg>
<div class="a tah" style="left:918px;top:132px;font-size:11.65px;font-weight:bold;color:#d6d3cc">Popview - 1</div>
<div class="a" style="left:898px;top:148px;width:702px;height:323px;background:#55cdae"></div>
<div class="a" style="left:898px;top:148px;width:691px;height:292px;background:#000;border:2px solid;border-color:#2c7f68 #b4ecdc #b4ecdc #2c7f68"></div>
<svg style="left:0;top:0" width="1600" height="888" font-family="Liberation Sans, sans-serif" font-weight="normal">
<g stroke="#f01010" stroke-width="2.2" fill="none"><path d="M902 207.5H1579M906.500 207V369M902 369H1579M1579 152V369M902 409H1586M902 244H907M902 313H907"/></g>
<g font-size="27" stroke-width="0.35">
<text x="940" y="255.5" textLength="121" lengthAdjust="spacingAndGlyphs" fill="#f01010" stroke="#f01010">Tolerance</text>
<text x="1079" y="255.5" textLength="22" lengthAdjust="spacingAndGlyphs" fill="#f01010" stroke="#f01010">to</text>
<text x="1117.5" y="255.5" textLength="66.0" lengthAdjust="spacingAndGlyphs" fill="#f01010" stroke="#f01010">apply</text>
<text x="1200" y="255.5" textLength="80" lengthAdjust="spacingAndGlyphs" fill="#f01010" stroke="#f01010">unless</text>
<text x="1295" y="255.5" textLength="120.5" lengthAdjust="spacingAndGlyphs" fill="#f01010" stroke="#f01010">otherwise</text>
<text x="1431" y="255.5" textLength="114" lengthAdjust="spacingAndGlyphs" fill="#f01010" stroke="#f01010">required:</text>
<text x="921" y="295.5" textLength="55" lengthAdjust="spacingAndGlyphs" fill="#f01010" stroke="#f01010">PTH:</text>
<text x="1217" y="295.5" fill="#f01010" stroke="#f01010">|</text>
<text x="1239" y="295.5" textLength="113.5" lengthAdjust="spacingAndGlyphs" fill="#f01010" stroke="#f01010">PT-MILL:</text>
<text x="944" y="336" textLength="73.5" lengthAdjust="spacingAndGlyphs" fill="#20e8f8" stroke="#20e8f8">NPTH:</text>
<text x="1217" y="336" fill="#f01010" stroke="#f01010">|</text>
<text x="1239" y="336" textLength="133.5" lengthAdjust="spacingAndGlyphs" fill="#f01010" stroke="#f01010">NPT-MILL:</text>
<text x="994" y="295.5" textLength="76" lengthAdjust="spacingAndGlyphs" fill="#f01010" stroke="#f01010">+0.1/</text>
<text transform="translate(1074.99,293.0) scale(2.279,1)" fill="#f01010" stroke="#f01010">-</text>
<text x="1096" y="295.5" textLength="106.5" lengthAdjust="spacingAndGlyphs" fill="#f01010" stroke="#f01010">0.05mm</text>
<text x="1371" y="295.5" textLength="73" lengthAdjust="spacingAndGlyphs" fill="#f01010" stroke="#f01010">+0.2/</text>
<text transform="translate(1450.99,293.0) scale(2.279,1)" fill="#f01010" stroke="#f01010">-</text>
<text x="1473" y="295.5" textLength="91" lengthAdjust="spacingAndGlyphs" fill="#f01010" stroke="#f01010">0.1mm</text>
<text x="1035" y="336" textLength="75" lengthAdjust="spacingAndGlyphs" fill="#20e8f8" stroke="#20e8f8">+0.1/</text>
<text transform="translate(1115.99,333.5) scale(2.279,1)" fill="#20e8f8" stroke="#20e8f8">-</text>
<text x="1138" y="336" textLength="64.5" lengthAdjust="spacingAndGlyphs" fill="#20e8f8" stroke="#20e8f8">0mm</text>
<text x="1390" y="336" textLength="34" lengthAdjust="spacingAndGlyphs" fill="#f01010" stroke="#f01010">+/</text>
<text transform="translate(1428.49,333.5) scale(2.279,1)" fill="#f01010" stroke="#f01010">-</text>
<text x="1450.5" y="336" textLength="90.5" lengthAdjust="spacingAndGlyphs" fill="#f01010" stroke="#f01010">0.1mm</text>
</g>
</svg>
<!-- right side buttons of popview -->
<div class="a" style="left:1589px;top:148px;width:11px;height:292px;background:#55cdae"></div>
<div class="a" style="left:1590px;top:149px;width:10px;height:248px;background:#0a2a24"></div>
<div class="a r" style="left:1591px;top:150px;width:20px;height:34px;border-width:2px"></div><div class="a" style="left:1597px;top:156px;width:10px;height:22px;border:1px solid #000"></div>
<div class="a r" style="left:1591px;top:185px;width:20px;height:34px;border-width:2px"></div><div class="a" style="left:1597px;top:191px;width:10px;height:22px;border:1px solid #000"></div>
<div class="a r" style="left:1591px;top:220px;width:20px;height:34px;border-width:2px"></div><div class="a" style="left:1597px;top:226px;width:10px;height:22px;border:1px solid #000"></div>
<div class="a r" style="left:1591px;top:255px;width:20px;height:34px;border-width:2px"></div><div class="a" style="left:1597px;top:261px;width:10px;height:22px;border:1px solid #000"></div>
<div class="a r" style="left:1591px;top:290px;width:20px;height:34px;border-width:2px"></div><div class="a" style="left:1597px;top:296px;width:10px;height:22px;border:1px solid #000"></div>
<div class="a r" style="left:1591px;top:326px;width:20px;height:34px;border-width:2px"></div><div class="a" style="left:1597px;top:332px;width:10px;height:22px;border:1px solid #000"></div>
<div class="a r" style="left:1591px;top:361px;width:20px;height:34px;border-width:2px"></div><div class="a" style="left:1597px;top:367px;width:10px;height:22px;border:1px solid #000"></div>
<!-- close button -->
<div class="a" style="left:898px;top:441px;width:712px;height:29px;background:#55cdae;border:1px solid #000"></div>
<div class="a r c" style="left:899px;top:443px;width:720px;height:25px;line-height:23px;padding-right:0"><span class="a" style="left:338px;top:0">Close</span></div>
<!-- selected -->
<div class="a" style="left:0;top:746px;width:156px;height:26px;background:#55cdae"></div>
<div class="a" style="left:3px;top:749px;width:150px;height:20px;background:#ffc24e;border:1px solid #2c7f68"></div>
<div class="a" style="left:6px;top:753px;font-size:12px;letter-spacing:-0.1px">Selected : 95</div>
<!-- status row -->
<div class="a" style="left:0;top:772px;width:1600px;height:35px;background:#000"></div>
<div class="a" style="left:0;top:773px;width:349px;height:32px;background:#ffffd8"></div><div class="a" style="left:349px;top:774px;width:1172px;height:31px;background:#ffffd8"></div>
<div class="a" style="left:0;top:772px;width:96px;height:34px;background:#000"></div>
<div class="a" style="left:1.5px;top:773.5px;width:30.5px;height:31.5px;background:#ffffd8"></div><div class="a" style="left:4px;top:776px;width:26px;height:27px;border:1px solid #e6e6bc"></div>
<div class="a" style="left:34px;top:773.5px;width:30.5px;height:31.5px;background:#ffffd8"></div><div class="a" style="left:37px;top:776px;width:25px;height:27px;border:1px solid #e6e6bc"></div>
<div class="a" style="left:66px;top:774px;width:28px;height:31px;background:#55cdae"></div>
<div class="a" style="left:68.500px;top:776.500px;width:23px;height:26px;background:#ffffd8;border:2px solid;border-color:#f4ecc8 #b8b088 #b8b088 #f4ecc8"></div>
<svg style="left:0;top:772px" width="100" height="34" viewBox="0 0 100 34" fill="none" stroke="#000"><rect x="7.800" y="8" width="18.500" height="18.500" stroke-width="1.500"/><path d="M11 11L23 23M11 11H15.500M11 11V15.500M23 23H18.500M23 23V18.500M10.500 13V24.500H24" stroke-width="1.200"/>
<rect x="39.800" y="8" width="18.500" height="18.500" stroke-width="1.500"/><path d="M42 24.500L54.500 11.500M42 24.500H56M45.500 14V18H48.500" stroke-width="1.500"/><path d="M51 21.500h2v2h-2zM54.500 21.500v2" stroke-width="0.800"/>
<rect x="72.500" y="10" width="15" height="15" stroke-width="1.400"/><path d="M80 13V22.500M75 18H85.500M75 22.500V16L78.500 13H85.500V22.500Z" stroke-width="1.200"/></svg>
<div class="a" style="left:95.500px;top:773.500px;width:254px;height:31.500px;background:#ffffd8"></div>
<div class="a ser" style="left:98px;top:783px;font-size:13.5px;font-weight:bold;letter-spacing:1.2px">X Y :</div>
<div class="a" style="left:144px;top:775px;width:171px;height:29.5px;background:#ffffd8;border:2px solid;border-color:#9c9c74 #d8d8ac #d8d8ac #9c9c74"></div>
<div class="a" style="left:152px;top:778px;width:1px;height:13px;background:repeating-linear-gradient(#000 0 1px,transparent 1px 2px)"></div><div class="a" style="left:151px;top:778px;width:3px;height:1px;background:#000"></div><div class="a" style="left:151px;top:791px;width:3px;height:1px;background:#000"></div>
<div class="a" style="left:316px;top:773px;width:33px;height:32px;background:#000"></div><div class="a" style="left:317.5px;top:773.5px;width:29.5px;height:31.5px;background:#48b89c"></div>
<div class="a" style="left:320.5px;top:776.5px;width:23.5px;height:26px;background:#ffffd8;border:2px solid;border-color:#f4ecc8 #b8b088 #b8b088 #f4ecc8"></div>
<div class="a" style="left:324.5px;top:781px;width:15.5px;height:16.5px;border:1px solid #000"></div>
<div class="a tah" style="left:330px;top:782px;font-size:13px;font-weight:bold">!</div>
<div class="a ser" style="left:352px;top:784px;font-size:12.5px;font-weight:bold;font-family:'Liberation Mono',monospace;letter-spacing:-0.53px">&lt;M1&gt; - Select first rectangle corner</div>
<!-- inch -->
<div class="a" style="left:1519px;top:772px;width:81px;height:34px;background:#000"></div>
<div class="a" style="left:1521px;top:773.5px;width:77px;height:31.5px;background:#55cdae"></div>
<div class="a rt" style="left:1527px;top:776px;width:69px;height:26px"></div>
<div class="a" style="left:1533px;top:783px;font-size:14.5px">Inch</div>
<div class="a rt" style="left:1577px;top:786px;width:13px;height:7px;border-width:1px"></div>
<!-- cyan message bar -->
<div class="a" style="left:0;top:805px;width:1600px;height:44px;background:#55cdae"></div>
<div class="a" style="left:0;top:805px;width:1600px;height:1.500px;background:#000"></div>
<div class="a" style="left:0;top:806.500px;width:1600px;height:3px;background:#5a8f8a"></div>
<div class="a" style="left:0;top:806px;width:2px;height:41px;background:#3a8070"></div>
<div class="a" style="left:2px;top:809px;width:1597px;height:27px;background:#000"></div>
<div class="a" style="left:3px;top:810px;width:1595px;height:25px;background:#b2fbfb;border:2px solid;border-color:#dcffff #5a9a98 #5a9a98 #dcffff"></div>
<div class="a c" style="left:0;top:817px;width:1600px;font-size:12.5px;letter-spacing:-0.52px">4 r118.11 Pads were selected</div>
<div class="a" style="left:2px;top:836px;width:1598px;height:2px;background:#d8fefe"></div>
<div class="a" style="left:0;top:838px;width:1600px;height:2px;background:#dcd8d0"></div>
<div class="a" style="left:0;top:840px;width:1600px;height:1.500px;background:#8a867e"></div>
<div class="a" style="left:2px;top:841.500px;width:1598px;height:3.500px;background:#60c8b0"></div>
<div class="a" style="left:2px;top:845px;width:1598px;height:1px;background:#2c7f68"></div>
<div class="a" style="left:0;top:846px;width:1600px;height:3px;background:#b4ecdc"></div>
<!-- taskbar -->
<div class="a" style="left:0;top:849px;width:1600px;height:39px;background:#d4d0c8;border-top:1px solid #f4f2ec"></div>
<div class="a" style="left:2px;top:851px;width:47px;height:23px;background:#d4d0c8;border:1px solid;border-color:#fff #404040 #404040 #fff;box-shadow:inset -1px -1px 0 #808080"></div>
<svg style="left:5px;top:853px" width="18" height="18" viewBox="0 0 18 18"><path d="M2 4 Q5 2 8 4 L7 9 Q4 7 1 9Z" fill="#e8501c"/><path d="M9 4 Q12 6 15 4 L14 9 Q11 11 8 9Z" fill="#5ab42a"/><path d="M1 10 Q4 8 7 10 L6 15 Q3 13 0 15Z" fill="#2a6ad8"/><path d="M8 10 Q11 12 14 10 L13 15 Q10 17 7 15Z" fill="#f0c020"/></svg>
<div class="a tah" style="left:22px;top:857px;font-size:12px;font-weight:normal;color:#000">开始</div>
<svg style="left:68px;top:867px" width="18" height="18" viewBox="0 0 18 18"><circle cx="5" cy="5" r="4" fill="#4ab838"/><circle cx="13" cy="5" r="4" fill="#38a0e8"/><circle cx="5" cy="13" r="4" fill="#f0b818"/><circle cx="13" cy="13" r="4" fill="#e84838"/></svg>
<div class="a" style="left:105px;top:852px;width:2px;height:36px;border-left:1px solid #808080;border-right:1px solid #fff"></div>
<div class="a" style="left:117px;top:852px;width:143px;height:22px;background:#d4d0c8;border:1px solid;border-color:#fff #404040 #404040 #fff;box-shadow:inset -1px -1px 0 #808080"></div><svg style="left:122px;top:855px" width="16" height="16" viewBox="0 0 16 16"><rect x="1.5" y="0.5" width="12" height="15" rx="1" fill="#e4eefa" stroke="#4c8cdc"/><rect x="3.5" y="2.5" width="8" height="3.500" fill="#fff" stroke="#8cb4e4"/><g fill="#5c94dc"><rect x="3.5" y="8" width="2" height="1.500"/><rect x="6.500" y="8" width="2" height="1.500"/><rect x="9.500" y="8" width="2" height="1.500"/><rect x="3.5" y="10.500" width="2" height="1.500"/><rect x="6.500" y="10.500" width="2" height="1.500"/><rect x="9.500" y="10.500" width="2" height="1.500"/><rect x="3.5" y="13" width="2" height="1.500"/><rect x="6.500" y="13" width="2" height="1.500"/><rect x="9.500" y="13" width="2" height="1.500"/></g></svg><div class="a tah" style="left:141px;top:857px;font-size:11.2px;font-weight:normal;color:#000;letter-spacing:-0.1px"><span style="font-size:12.5px">计算器</span></div>
<svg style="left:271px;top:854px" width="17" height="17" viewBox="0 0 17 17"><rect width="17" height="17" fill="#e8e8e0" rx="2"/><path d="M2 14 Q4 3 9 2 Q8 8 9 14Z" fill="#38a838"/><path d="M9 3 Q14 6 15 14 L10 14Z" fill="#e02020"/></svg>
<div class="a" style="left:298px;top:852px;width:143px;height:22px;background:#d4d0c8;border:1px solid;border-color:#fff #404040 #404040 #fff;box-shadow:inset -1px -1px 0 #808080"></div><svg style="left:303px;top:855px" width="16" height="16" viewBox="0 0 16 16"><path d="M0.500 0.500H13L15.500 3V15.500H0.500Z" fill="#2444c4" stroke="#14247c"/><rect x="3.500" y="1" width="8" height="5" fill="#e8ecf8"/><rect x="8.500" y="2" width="2" height="3" fill="#2444c4"/><rect x="2.500" y="9" width="11" height="6" fill="#f4f4f4"/><path d="M3.500 11H12.500M3.500 13H12.500" stroke="#e03030" stroke-width="1.200"/></svg><div class="a tah" style="left:322px;top:857px;font-size:11.2px;font-weight:normal;color:#000;letter-spacing:-0.1px">Total Commander 7.0...</div>
<div class="a" style="left:445px;top:852px;width:143px;height:22px;background:#d4d0c8;border:1px solid;border-color:#fff #404040 #404040 #fff;box-shadow:inset -1px -1px 0 #808080"></div><svg style="left:450px;top:855px" width="16" height="16" viewBox="0 0 16 16"><circle cx="8" cy="8.500" r="7" fill="#2c84c4" stroke="#185c94"/><path d="M3 6Q6 3 9 5Q12 4 13 8Q11 12 8 11Q5 13 3 10Z" fill="#58c048"/><circle cx="8" cy="8" r="2.500" fill="#f4e45c"/><path d="M2 3L5 5M14 3L11 5" stroke="#185c94" stroke-width="1.500"/></svg><div class="a tah" style="left:469px;top:857px;font-size:11.2px;font-weight:normal;color:#000;letter-spacing:-0.1px">get.exe</div>
<div class="a" style="left:591px;top:852px;width:143px;height:22px;background:#d4d0c8;border:1px solid;border-color:#fff #404040 #404040 #fff;box-shadow:inset -1px -1px 0 #808080"></div><svg style="left:596px;top:855px" width="16" height="16" viewBox="0 0 16 16"><rect x="0.5" y="0.5" width="15" height="15" fill="#ffffe8" stroke="#555"/><rect x="1" y="1" width="14" height="3" fill="#1a2a8a"/><path d="M4 6.500 L12 13 M12 6.500 L4 13" stroke="#c8c400" stroke-width="2.4"/><path d="M4 6.500 L12 13 M12 6.500 L4 13" stroke="#6a7a10" stroke-width="0.8"/></svg><div class="a tah" style="left:615px;top:857px;font-size:11.2px;font-weight:normal;color:#000;letter-spacing:-0.1px">Engineering Toolkit 9....</div>
<div class="a" style="left:737px;top:852px;width:143px;height:22px;background:#d4d0c8;border:1px solid;border-color:#fff #404040 #404040 #fff;box-shadow:inset -1px -1px 0 #808080"></div><svg style="left:742px;top:855px" width="16" height="16" viewBox="0 0 16 16"><rect x="0.5" y="0.5" width="15" height="15" fill="#ffffe8" stroke="#555"/><rect x="1" y="1" width="14" height="3" fill="#1a2a8a"/><path d="M4 6.500 L12 13 M12 6.500 L4 13" stroke="#c8c400" stroke-width="2.4"/><path d="M4 6.500 L12 13 M12 6.500 L4 13" stroke="#6a7a10" stroke-width="0.8"/></svg><div class="a tah" style="left:761px;top:857px;font-size:11.2px;font-weight:normal;color:#000;letter-spacing:-0.1px">Progress</div>
<div class="a" style="left:882px;top:852px;width:142px;height:22px;background:#d4d0c8;border:1px solid;border-color:#fff #404040 #404040 #fff;box-shadow:inset -1px -1px 0 #808080"></div><svg style="left:887px;top:855px" width="16" height="16" viewBox="0 0 16 16"><rect x="0.5" y="0.5" width="15" height="15" fill="#ffffe8" stroke="#555"/><rect x="1" y="1" width="14" height="3" fill="#1a2a8a"/><path d="M4 6.500 L12 13 M12 6.500 L4 13" stroke="#c8c400" stroke-width="2.4"/><path d="M4 6.500 L12 13 M12 6.500 L4 13" stroke="#6a7a10" stroke-width="0.8"/></svg><div class="a tah" style="left:906px;top:857px;font-size:11.2px;font-weight:normal;color:#000;letter-spacing:-0.1px">Graphic Editor 9.07b2...</div>
<div class="a" style="left:1026px;top:852px;width:143px;height:22px;background:#d4d0c8;border:1px solid;border-color:#fff #404040 #404040 #fff;box-shadow:inset -1px -1px 0 #808080"></div><svg style="left:1031px;top:855px" width="16" height="16" viewBox="0 0 16 16"><rect x="0.5" y="0.5" width="15" height="15" fill="#ffffe8" stroke="#555"/><rect x="1" y="1" width="14" height="3" fill="#1a2a8a"/><path d="M4 6.500 L12 13 M12 6.500 L4 13" stroke="#c8c400" stroke-width="2.4"/><path d="M4 6.500 L12 13 M12 6.500 L4 13" stroke="#6a7a10" stroke-width="0.8"/></svg><div class="a tah" style="left:1050px;top:857px;font-size:11.2px;font-weight:normal;color:#000;letter-spacing:-0.1px">Dialog Box</div>
<div class="a" style="left:1171px;top:852px;width:144px;height:22px;background:#fff;border:1px solid;border-color:#404040 #fff #fff #404040;box-shadow:inset 1px 1px 0 #808080"></div><svg style="left:1176px;top:855px" width="16" height="16" viewBox="0 0 16 16"><rect x="0.5" y="0.5" width="15" height="15" fill="#ffffe8" stroke="#555"/><rect x="1" y="1" width="14" height="3" fill="#1a2a8a"/><path d="M4 6.500 L12 13 M12 6.500 L4 13" stroke="#c8c400" stroke-width="2.4"/><path d="M4 6.500 L12 13 M12 6.500 L4 13" stroke="#6a7a10" stroke-width="0.8"/></svg><div class="a tah" style="left:1195px;top:857px;font-size:11.9px;font-weight:bold;color:#000;letter-spacing:-0.1px">Drill Tool Manager</div>
<div class="a" style="left:117px;top:876px;width:147px;height:22px;background:#d4d0c8;border:1px solid;border-color:#fff #404040 #404040 #fff;box-shadow:inset -1px -1px 0 #808080"></div><svg style="left:122px;top:879px" width="16" height="16" viewBox="0 0 16 16"><path d="M8 1L10 6L15 6.500L11.500 10L12.500 15L8 12.500L3.500 15L4.500 10L1 6.500L6 6Z" fill="#f4a82c" stroke="#d4781c" stroke-width="0.800"/><circle cx="8" cy="8.500" r="2.500" fill="#fce48c"/></svg><div class="a tah" style="left:141px;top:881px;font-size:11.2px;font-weight:normal;color:#000;letter-spacing:-0.1px"><span style="font-size:12.5px">兴森快捷衡阳分公司</span></div>
<div class="a" style="left:268px;top:876px;width:146px;height:22px;background:#d4d0c8;border:1px solid;border-color:#fff #404040 #404040 #fff;box-shadow:inset -1px -1px 0 #808080"></div><svg style="left:273px;top:879px" width="16" height="16" viewBox="0 0 16 16"><path d="M3 1H12V15H3Z" fill="#f4f4f0" stroke="#98a498"/><path d="M6 6H11V4L15 8L11 12V10H6Z" fill="#2cac4c" stroke="#187c34" stroke-width="0.600"/></svg><div class="a tah" style="left:292px;top:881px;font-size:11.2px;font-weight:normal;color:#000;letter-spacing:-0.1px"><span style="font-size:12.5px">工程系统  版本：1...</span></div>
<div class="a" style="left:418px;top:876px;width:147px;height:22px;background:#d4d0c8;border:1px solid;border-color:#fff #404040 #404040 #fff;box-shadow:inset -1px -1px 0 #808080"></div><svg style="left:423px;top:879px" width="16" height="16" viewBox="0 0 16 16"><rect x="2.500" y="0.500" width="11" height="15" fill="#fff" stroke="#4c7cbc"/><path d="M4.500 3.500H11.500M4.500 6H11.500M4.500 8.500H11.500M4.500 11H11.500" stroke="#3c6cbc" stroke-width="1.200"/></svg><div class="a tah" style="left:442px;top:881px;font-size:11.2px;font-weight:normal;color:#000;letter-spacing:-0.1px"><span style="font-size:12.5px">制作规范</span> (Ver:1.0.6)</div>
<div class="a" style="left:568px;top:876px;width:146px;height:22px;background:#d4d0c8;border:1px solid;border-color:#fff #404040 #404040 #fff;box-shadow:inset -1px -1px 0 #808080"></div><svg style="left:573px;top:879px" width="16" height="16" viewBox="0 0 16 16"><rect x="0.500" y="2.500" width="15" height="11" fill="#fff" stroke="#787878"/><circle cx="8" cy="8" r="5.500" fill="#3c64d4" stroke="#1c348c"/><path d="M4 6Q8 3 12 6Q10 9 12 11Q8 13 5 11Q6 8 4 6Z" fill="#58b848"/></svg><div class="a tah" style="left:592px;top:881px;font-size:11.2px;font-weight:normal;color:#000;letter-spacing:-0.1px">pcbnet2002</div>
<div class="a" style="left:717px;top:876px;width:147px;height:22px;background:#d4d0c8;border:1px solid;border-color:#fff #404040 #404040 #fff;box-shadow:inset -1px -1px 0 #808080"></div><svg style="left:722px;top:879px" width="16" height="16" viewBox="0 0 16 16"><rect x="3.500" y="0.500" width="12" height="15" fill="#fff" stroke="#589868"/><rect x="0.500" y="3.500" width="8" height="9" fill="#2c9c54" stroke="#187838"/><path d="M2.500 5.500L6.500 10.500M6.500 5.500L2.500 10.500" stroke="#fff" stroke-width="1.400"/><path d="M10 4H14M10 7H14M10 10H14" stroke="#98c8a8"/></svg><div class="a tah" style="left:741px;top:881px;font-size:11.2px;font-weight:normal;color:#000;letter-spacing:-0.1px">4V144NB1A0<span style="font-size:12.5px">制作单</span> x...</div>
<div class="a" style="left:867px;top:876px;width:146px;height:22px;background:#d4d0c8;border:1px solid;border-color:#fff #404040 #404040 #fff;box-shadow:inset -1px -1px 0 #808080"></div><svg style="left:872px;top:879px" width="16" height="16" viewBox="0 0 16 16"><circle cx="8" cy="8.500" r="6.500" fill="#2c9cc4" stroke="#186c8c"/><path d="M2 7Q5 2 9 4Q13 3 14 8Q10 9 8 13Q4 12 2 7Z" fill="#68c8e4"/><path d="M1 5H8M0 8H6M1 11H7" stroke="#187898" stroke-width="1.200"/></svg><div class="a tah" style="left:891px;top:881px;font-size:11.2px;font-weight:normal;color:#000;letter-spacing:-0.1px">CAM_Guide v2.40...</div>
<div class="a" style="left:1016px;top:876px;width:148px;height:22px;background:#d4d0c8;border:1px solid;border-color:#fff #404040 #404040 #fff;box-shadow:inset -1px -1px 0 #808080"></div><svg style="left:1021px;top:879px" width="16" height="16" viewBox="0 0 16 16"><rect x="3.500" y="0.500" width="12" height="15" fill="#fff" stroke="#5c84c4"/><rect x="0.500" y="3.500" width="8" height="9" fill="#2c5cb4" stroke="#183c84"/><path d="M2 5.500L3.300 10.500L4.500 7L5.700 10.500L7 5.500" stroke="#fff" fill="none" stroke-width="1.100"/><path d="M10 4H14M10 7H14M10 10H14" stroke="#98b4dc"/></svg><div class="a tah" style="left:1040px;top:881px;font-size:11.2px;font-weight:normal;color:#000;letter-spacing:-0.1px">20130912104704914...</div>
<div class="a" style="left:1167px;top:876px;width:148px;height:22px;background:#d4d0c8;border:1px solid;border-color:#fff #404040 #404040 #fff;box-shadow:inset -1px -1px 0 #808080"></div><svg style="left:1172px;top:879px" width="16" height="16" viewBox="0 0 16 16"><rect x="1.500" y="1.500" width="13" height="13" fill="#fff" stroke="#6484ac"/><rect x="1.500" y="1.500" width="13" height="3" fill="#8cacdc"/><path d="M4 7H9M4 9.500H12M4 12H10" stroke="#5c7cac"/><text x="3" y="8" font-size="6" fill="#c03030" font-family="Liberation Sans">A</text></svg><div class="a tah" style="left:1191px;top:881px;font-size:11.2px;font-weight:normal;color:#000;letter-spacing:-0.1px">4v144nb1a0.txt - <span style="font-size:12.5px">写</span>...</div>
<div class="a" style="left:1326px;top:852px;width:2px;height:36px;border-left:1px solid #808080;border-right:1px solid #fff"></div>
<svg style="left:1336px;top:856px" width="18" height="30" viewBox="0 0 18 30" fill="none"><rect x="1.5" y="5.500" width="15" height="9" rx="1" fill="#c8c8c8" stroke="#787878"/><path d="M4 8H14M4 10.500H14M5 12.500H13" stroke="#787878" stroke-width="1" stroke-dasharray="1.5 1"/><path d="M8 5 Q9 1 13 2" stroke="#787878"/><rect x="4.500" y="20.500" width="5" height="4" stroke="#000" stroke-width="1"/><rect x="2.500" y="22.500" width="5" height="4" fill="#d4d0c8" stroke="#000" stroke-width="1"/></svg>
<div class="a" style="left:1357px;top:852px;width:243px;height:36px;border:1px solid;border-color:#808080 #fff #fff #808080"></div>
<svg style="left:1360px;top:852px" width="240" height="36" viewBox="0 0 240 36"><path d="M3 9L6 6L9 9M3 14L6 11L9 14" fill="none" stroke="#000" stroke-width="1.4"/><circle cx="27" cy="11.500" r="7.500" fill="#e8d800" stroke="#688810"/><circle cx="27" cy="11.500" r="5" fill="#38a020"/><path d="M27 8.500V14.500M24 11.500H30" stroke="#fff" stroke-width="1.600"/><path d="M44 5L57 18M57 5L44 18" stroke="#78189a" stroke-width="2.400"/><rect x="68" y="3" width="14" height="15" rx="2" fill="#2888d8"/><circle cx="75" cy="10" r="4.500" fill="#fff"/><path d="M72 10H78" stroke="#2888d8" stroke-width="1.500"/><rect x="76" y="15" width="8" height="4" rx="2" fill="#58c830" stroke="#fff" stroke-width="0.700"/><ellipse cx="99" cy="11.500" rx="5.500" ry="7.500" fill="#184898"/><path d="M96 8L102 14L99 17V6L102 9L96 15" fill="none" stroke="#fff" stroke-width="1.100"/><path d="M117 5Q122 6 127 5Q128 14 122 19Q116 14 117 5Z" fill="#58b830" stroke="#e8f0e0"/><path d="M123 8L120 12H123L121 16" stroke="#fff" fill="none" stroke-width="1.2"/><path d="M141 6H147V17H141Z M147 8H152V15H147" fill="#fff" stroke="#383838" stroke-width="1.300"/><path d="M152 10H155M152 13H155M149 4V7M144 4V7" stroke="#383838" stroke-width="1.300"/><path d="M14 30Q18 24 24 27Q20 30 22 35" fill="none" stroke="#e03020" stroke-width="2.500"/><path d="M40 36L48 26L47 32L52 30" fill="#e82818"/><path d="M38 36L44 30" stroke="#38a838" stroke-width="2"/><path d="M66 30Q72 24 82 28Q76 30 78 36Z" fill="#2878d8"/><path d="M70 26Q76 22 83 25" stroke="#e83020" stroke-width="2.500" fill="none"/><rect x="92" y="28" width="8" height="8" fill="#c8c8c8" stroke="#585858"/><path d="M94 25V28M98 25V28" stroke="#585858" stroke-width="1.400"/><rect x="99" y="30" width="7" height="6" fill="#e8e8e8" stroke="#585858"/><path d="M116 32H119L123 28V36Z" fill="#888"/><path d="M126 29Q129 32 126 36M129 27Q133 32 129 36" stroke="#a0a0a0" fill="none"/><rect x="221" y="17" width="15" height="11" fill="#2870c8" stroke="#88b8e8"/><path d="M222 26L230 21" stroke="#88c8f8"/><rect x="224" y="29" width="9" height="2" fill="#68a0d8"/></svg>
<div class="a tah" style="left:1538px;top:861px;font-size:11px;font-weight:normal;color:#000">17:10</div>
<div class="a tah" style="left:1527px;top:878.5px;font-size:11px;font-weight:normal;color:#000">2016/6/18</div>
</body></html>
